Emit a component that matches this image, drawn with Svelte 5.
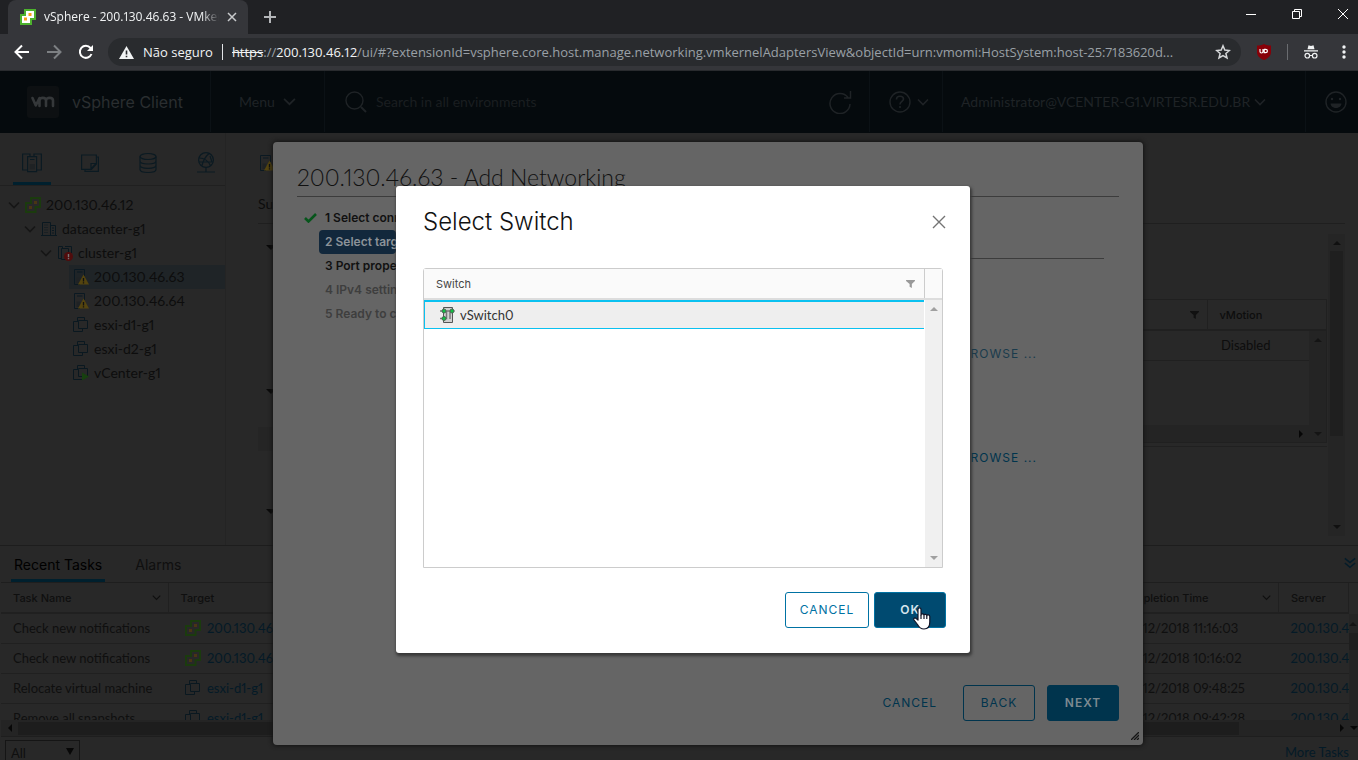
<script>
  const tree = [
    { label: '200.130.46.12', icon: 'vcenter', depth: 0, open: true },
    { label: 'datacenter-g1', icon: 'datacenter', depth: 1, open: true },
    { label: 'cluster-g1', icon: 'cluster', depth: 2, open: true },
    { label: '200.130.46.63', icon: 'host', depth: 3, selected: true },
    { label: '200.130.46.64', icon: 'host', depth: 3 },
    { label: 'esxi-d1-g1', icon: 'vm', depth: 3 },
    { label: 'esxi-d2-g1', icon: 'vm', depth: 3 },
    { label: 'vCenter-g1', icon: 'vmon', depth: 3 }
  ];
  const inventory = ['hosts', 'vms', 'storage', 'network'];
  const tasks = [
    { name: 'Check new notifications', icon: 'vcenter', target: '200.130.46.12', time: '12/2018 11:16:03' },
    { name: 'Check new notifications', icon: 'vcenter', target: '200.130.46.12', time: '12/2018 10:16:02' },
    { name: 'Relocate virtual machine', icon: 'vm', target: 'esxi-d1-g1', time: '12/2018 09:48:25' },
    { name: 'Remove all snapshots', icon: 'vm', target: 'esxi-d1-g1', time: '12/2018 09:42:28' }
  ];
  const steps = [
    { label: '1 Select connection type', state: 'done' },
    { label: '2 Select target device', state: 'current' },
    { label: '3 Port properties', state: 'open' },
    { label: '4 IPv4 settings', state: 'off' },
    { label: '5 Ready to complete', state: 'off' }
  ];
</script>

{#snippet chevron(w)}
  <svg width={w} height={w} viewBox="0 0 12 12" fill="none" stroke="currentColor" stroke-width="1.6" aria-hidden="true"><path d="M1 3.5l5 5 5-5" /></svg>
{/snippet}

{#snippet funnel()}
  <svg width="9" height="8" viewBox="0 0 10 9" fill="currentColor" aria-hidden="true"><path d="M0 0h10v1L6.500 4.500V9L4 7.500v-3L0 1z" /></svg>
{/snippet}

{#snippet arrow(dir)}
  <svg class="arrow" width="8" height="8" viewBox="0 0 8 8" fill="currentColor" aria-hidden="true">
    {#if dir === 'up'}<path d="M0 6l4-4 4 4z" />
    {:else if dir === 'down'}<path d="M0 2l4 4 4-4z" />
    {:else if dir === 'left'}<path d="M6 0L2 4l4 4z" />
    {:else}<path d="M2 0l4 4-4 4z" />{/if}
  </svg>
{/snippet}

{#snippet icon(name)}
  <svg class="ico" width="16" height="16" viewBox="0 0 16 16" fill="none" aria-hidden="true">
    {#if name === 'vcenter'}
      <path d="M6 1h9v9h-4.500v5H1V6h5z" stroke="#1b3b0e" stroke-width="2" />
      <path d="M9 4h3v3H9zM4 9h3v3H4z" fill="#4a3514" />
    {:else if name === 'datacenter'}
      <path d="M1.500 14.500v-13h8v13M9.500 4.500h5v10M0 14.500h16" stroke="#0a1820" />
      <path d="M3.500 4h4M3.500 6.500h4M3.500 9h4M3.500 11.500h4" stroke="#0a1820" stroke-dasharray="1 1" />
      <path d="M11 7h2M11 9.500h2M11 12h2" stroke="#0a1820" />
    {:else if name === 'cluster'}
      <path d="M4 13.500H1.500v-12h4v2M8 1.500h6.500V8M4.500 3.500h7v11h-7z" stroke="#0a1820" />
      <circle cx="11.500" cy="11.500" r="4.500" fill="#500c0c" />
      <path d="M11.500 9v3.200M11.500 13v1.300" stroke="#777" stroke-width="1.400" />
    {:else if name === 'host'}
      <path d="M7 15.500H1.500V.500h10V7M4 3h5.500" stroke="#0b1922" />
      <path d="M3.500 8.500h4V14h-4z" fill="#1f2224" />
      <path d="M10.500 5.500l5.500 10H5z" fill="#54440f" />
      <path d="M10.500 9v3.500M10.500 13.300v1.200" stroke="#111" stroke-width="1.300" />
    {:else}
      <path d="M4.500 5V.500h7V4M5.500 4.500H.500v10h9V12M5.500 4.500v7h9v-8h-9z" stroke="#0a1820" />
      {#if name === 'vmon'}<path d="M9 7.500l7 4-7 4z" fill="#17400f" />{/if}
    {/if}
  </svg>
{/snippet}

<div class="window">
  <header class="browser">
    <div class="strip">
      <div class="tab">
        <svg width="16" height="16" viewBox="0 0 16 16" aria-hidden="true">
          <path d="M5 1h10v9h-4v5H1V6h4z" fill="#fff" stroke="#4db22d" stroke-width="2" />
          <path d="M8.500 4h3v3h-3zM4 8.500h3v3H4z" fill="#f9a11b" />
        </svg>
        <span class="title">vSphere - 200.130.46.63 - VMkernel</span>
        <button class="bare" aria-label="Close tab">
          <svg width="10" height="10" viewBox="0 0 10 10" stroke="#c9cbcd" stroke-width="1.500"><path d="M1 1l8 8M9 1L1 9" /></svg>
        </button>
      </div>
      <button class="bare plus" aria-label="New tab">
        <svg width="12" height="12" viewBox="0 0 12 12" stroke="#b4b6b9" stroke-width="2"><path d="M6 0v12M0 6h12" /></svg>
      </button>
      <div class="sys">
        <button class="bare" aria-label="Minimize"><svg width="12" height="12" viewBox="0 0 12 12" stroke="#fff"><path d="M1 6.500h10" /></svg></button>
        <button class="bare" aria-label="Restore"><svg width="12" height="12" viewBox="0 0 12 12" stroke="#fff" fill="none"><path d="M1.500 3.500h7v7h-7zM3.500 3V1.500h7v7H9" /></svg></button>
        <button class="bare" aria-label="Close"><svg width="12" height="12" viewBox="0 0 12 12" stroke="#fff"><path d="M1 1l10 10M11 1L1 11" /></svg></button>
      </div>
    </div>
    <div class="toolbar">
      <button class="bare" aria-label="Back"><svg width="16" height="16" viewBox="0 0 16 16" fill="none" stroke="#fff" stroke-width="2"><path d="M15 8H2M8 1.500L1.500 8 8 14.500" /></svg></button>
      <button class="bare" aria-label="Forward"><svg width="16" height="16" viewBox="0 0 16 16" fill="none" stroke="#7d8083" stroke-width="2"><path d="M1 8h13M8 1.500L14.500 8 8 14.500" /></svg></button>
      <button class="bare" aria-label="Reload"><svg width="16" height="16" viewBox="0 0 16 16" fill="none" stroke="#fff" stroke-width="2"><path d="M13.500 10A6 6 0 1 1 12.500 4L14 5.500" /><path d="M15 1v6H9z" fill="#fff" stroke="none" /></svg></button>
      <div class="omni">
        <svg width="15" height="13" viewBox="0 0 15 13" aria-hidden="true"><path d="M7.500 0L15 13H0z" fill="#f1f3f4" /><path d="M7.500 4.500v4M7.500 9.800v1.500" stroke="#292b2e" stroke-width="1.600" /></svg>
        <span class="insecure">Não seguro</span>
        <span class="bar"></span>
        <span class="url"><s>https</s>://<b>200.130.46.12</b>/ui/#?extensionId=vsphere.core.host.manage.networking.vmkernelAdaptersView&amp;objectId=urn:vmomi:HostSystem:host-25:7183620d...</span>
        <button class="bare" aria-label="Bookmark"><svg width="16" height="16" viewBox="0 0 16 16" fill="none" stroke="#d5d7d9" stroke-width="1.500"><path d="M8 1.800l1.800 4.300 4.600.400-3.500 3 1.100 4.500L8 11.600 4 14l1.100-4.500-3.500-3 4.600-.400z" /></svg></button>
      </div>
      <svg width="14" height="16" viewBox="0 0 14 16" aria-hidden="true"><path d="M7 0c2 1 4.500 1.600 7 1.600V8c0 4-3 6.500-7 8-4-1.500-7-4-7-8V1.600C2.500 1.600 5 1 7 0z" fill="#870008" /><path d="M3 5v2.500a1.500 1.500 0 0 0 3 0V5M7.200 5.500v3.200h1.500a1.700 1.700 0 0 0 0-3.400H7" fill="none" stroke="#fff" stroke-width="1.200" /></svg>
      <span class="bar dim"></span>
      <svg width="14" height="14" viewBox="0 0 14 14" aria-hidden="true"><path d="M3.500 4.200L4.500.300l2.500.7 2.500-.7 1 3.900zM0 5.200h14v1.400H0z" fill="#f1f3f4" /><circle cx="3.300" cy="10.700" r="2.300" fill="none" stroke="#f1f3f4" stroke-width="1.200" /><circle cx="10.700" cy="10.700" r="2.300" fill="none" stroke="#f1f3f4" stroke-width="1.200" /><path d="M5.500 10.500h3" stroke="#f1f3f4" /></svg>
      <button class="bare more" aria-label="Browser menu"><svg width="4" height="14" viewBox="0 0 4 14" fill="#f1f3f4"><circle cx="2" cy="2" r="1.700" /><circle cx="2" cy="7" r="1.700" /><circle cx="2" cy="12" r="1.700" /></svg></button>
    </div>
  </header>

  <div class="top">
    <div class="brand">
      <span class="logo"><svg width="24" height="12" viewBox="0 0 24 12" fill="none" stroke="#35383a" stroke-width="2.600" stroke-linecap="round" stroke-linejoin="round" aria-hidden="true"><path d="M1.500 2l3.300 7.500L8.500 2v8M8.500 4.500C8.500 1 15 1 15 4.500V10M15 4.500c0-3.500 7-3.500 7 0V10" /></svg></span>
      <span class="product">vSphere Client</span>
    </div>
    <button class="bare menu">Menu {@render chevron(13)}</button>
    <label class="search">
      <svg width="22" height="22" viewBox="0 0 22 22" fill="none" stroke="currentColor" stroke-width="1.400" aria-hidden="true"><circle cx="9.500" cy="9.500" r="8.500" /><path d="M16 16l5 5" stroke-width="2" /></svg>
      <input type="text" placeholder="Search in all environments" aria-label="Search in all environments" />
    </label>
    <button class="bare refresh" aria-label="Refresh"><svg width="24" height="24" viewBox="0 0 24 24" fill="none" stroke="currentColor" stroke-width="1.500"><path d="M20 7.500A10 10 0 1 0 22 14M22.500 1v7H16" /></svg></button>
    <button class="bare help" aria-label="Help"><svg width="22" height="22" viewBox="0 0 22 22" fill="none" stroke="currentColor" stroke-width="1.400"><circle cx="11" cy="11" r="10" /><path d="M7.500 8.500c0-4.500 7-4 7-.500 0 2.500-3.500 2.500-3.500 5.500M11 15v2" stroke-width="1.600" /></svg>{@render chevron(12)}</button>
    <button class="bare user">Administrator@VCENTER-G1.VIRTESR.EDU.BR {@render chevron(12)}</button>
    <button class="bare smile" aria-label="Feedback"><svg width="22" height="22" viewBox="0 0 22 22" fill="none" stroke="currentColor" stroke-width="1.400"><circle cx="11" cy="11" r="10" /><path d="M5.500 12.500h11c-.500 6-10.500 6-11 0z" fill="currentColor" stroke="none" /><circle cx="7" cy="8" r="1.200" fill="currentColor" stroke="none" /><circle cx="15" cy="8" r="1.200" fill="currentColor" stroke="none" /></svg></button>
  </div>

  <main>
    <nav class="side">
      <div class="inv">
        {#each inventory as name, i}
          <button class="bare" class:active={i === 0} aria-label={name}>
            <svg width="20" height="22" viewBox="0 0 20 22" fill="none" stroke="#0b1a22" stroke-width="1.200">
              {#if name === 'hosts'}
                <path d="M5 18H.600V2H8v3M12 4V2h7.400v16H15M5.600 4.600h9v15h-9zM8 7.500h4.500" /><path d="M7.500 12h5.500v5.500H7.500z" fill="#1f2224" stroke="none" />
              {:else if name === 'vms'}
                <path d="M17 5h1.400v14.400H5V18M1.600 3h14.800v9l-5 5.400H1.600zM16 11.500h-5v5.500z" />
              {:else if name === 'storage'}
                <ellipse cx="10" cy="4.500" rx="8" ry="3" /><path d="M2 4.500v13c0 4 16 4 16 0v-13M2 9c0 4 16 4 16 0M2 13.300c0 4 16 4 16 0" />
              {:else}
                <circle cx="10" cy="8" r="7.400" /><path d="M3.500 6c5 0 8 2 11 7.500M6 13.500C7 9 9 5 13 1.500M3 10h13l-2-6M10 15.500v4M1 20h18" />
              {/if}
            </svg>
          </button>
        {/each}
      </div>
      <ul class="tree">
        {#each tree as node}
          <li class="d{node.depth}" class:selected={node.selected}>
            {#if node.open}<span class="twist">{@render chevron(12)}</span>{/if}
            {@render icon(node.icon)}
            <span>{node.label}</span>
          </li>
        {/each}
      </ul>
    </nav>

    <section class="content">
      <div class="object">
        <span class="objicon">{@render icon('host')}</span>
        <a href="#summary">Summary</a>
      </div>
      <div class="pane">
        <div class="marks" aria-hidden="true">
          <i class="caret"></i><i class="caret"></i><i class="block"></i><i class="caret"></i>
        </div>
        <div class="adapters">
          <div class="grid">
            <table>
              <thead><tr><th><span class="end">{@render funnel()}</span></th><th>vMotion</th></tr></thead>
              <tbody><tr><td></td><td>Disabled</td></tr></tbody>
            </table>
            <div class="gridv">{@render arrow('up')}{@render arrow('down')}</div>
            <div class="gridh">{@render arrow('right')}</div>
          </div>
        </div>
        <div class="bigscroll">{@render arrow('up')}<i></i>{@render arrow('down')}</div>
      </div>
    </section>
  </main>

  <section class="tasks">
    <div class="ttabs">
      <button class="bare on">Recent Tasks</button>
      <button class="bare">Alarms</button>
      <button class="bare collapse" aria-label="Collapse"><svg width="12" height="12" viewBox="0 0 14 13" fill="none" stroke="#041c2a" stroke-width="1.800"><path d="M1 1l6 5 6-5M1 6.500l6 5 6-5" /></svg></button>
    </div>
    <div class="list">
      <table>
        <colgroup><col class="c1" /><col /><col class="c3" /><col class="c4" /></colgroup>
        <thead>
          <tr>
            <th><span class="split">Task Name {@render chevron(9)}</span></th>
            <th>Target</th>
            <th><span class="split">Completion Time {@render chevron(9)}</span></th>
            <th>Server</th>
          </tr>
        </thead>
        <tbody>
          {#each tasks as t}
            <tr>
              <td>{t.name}</td>
              <td><span class="obj">{@render icon(t.icon)}<a href="#target">{t.target}</a></span></td>
              <td class="time">{t.time}</td>
              <td><a href="#server">200.130.46.12</a></td>
            </tr>
          {/each}
        </tbody>
      </table>
      <div class="listv">{@render arrow('up')}<i></i></div>
    </div>
    <div class="listh">{@render arrow('left')}<i></i><span>{@render arrow('right')}</span><span>{@render arrow('down')}</span></div>
    <div class="foot">
      <label class="filter">
        <select aria-label="Filter tasks"><option>All</option></select>
        <svg width="8" height="8" viewBox="0 0 8 8" fill="#070707" aria-hidden="true"><path d="M0 0h8L4 7z" /></svg>
      </label>
      <a href="#more">More Tasks</a>
    </div>
  </section>

  <section class="wizard" aria-label="Add Networking">
    <h2>200.130.46.63 - Add Networking</h2>
    <div class="wbody">
      <ol>
        {#each steps as s}
          <li class={s.state}>
            <span class="tick">{#if s.state === 'done'}<svg width="13" height="10" viewBox="0 0 13 10" fill="none" stroke="#06551b" stroke-width="2.600" aria-hidden="true"><path d="M1 5l3.500 3.500L12 1" /></svg>{/if}</span>
            <span class="step">{s.label}</span>
          </li>
        {/each}
      </ol>
      <div class="wpage">
        <button class="bare link faded">BROWSE ...</button>
        <button class="bare link">BROWSE ...</button>
      </div>
    </div>
    <div class="wfoot">
      <button class="bare link">CANCEL</button>
      <button class="btn back">BACK</button>
      <button class="btn primary">NEXT</button>
    </div>
    <svg class="grip" width="8" height="8" viewBox="0 0 8 8" stroke="#151515" stroke-width="1.300" aria-hidden="true"><path d="M0 8l8-8M3 8l5-5M6 8l2-2" /></svg>
  </section>

  <div class="dialog" role="dialog" aria-labelledby="dlg">
    <div class="dhead">
      <h2 id="dlg">Select Switch</h2>
      <button class="bare" aria-label="Close dialog"><svg width="14" height="14" viewBox="0 0 14 14" stroke="#747474" stroke-width="1.400"><path d="M1 1l12 12M13 1L1 13" /></svg></button>
    </div>
    <div class="switches">
      <table>
        <colgroup><col /><col class="sc" /></colgroup>
        <thead><tr><th><span class="split">Switch {@render funnel()}</span></th><th></th></tr></thead>
        <tbody>
          <tr><td><span class="sw">
            <svg width="16" height="16" viewBox="0 0 16 16" fill="none" aria-hidden="true"><path d="M3.500.500h9v15h-9z" fill="#d0d0d0" stroke="#555" /><path d="M0 4h14.500M0 11.500h4M6.500 4v7.500H4M10 4v8" stroke="#777" stroke-width="1.500" /><circle cx="4" cy="4" r="2" fill="#0fc142" stroke="#4b6653" /><circle cx="12" cy="4" r="2" fill="#0fc142" stroke="#4b6653" /><circle cx="4" cy="11.500" r="2" fill="#0fc142" stroke="#4b6653" /></svg>
            vSwitch0</span></td></tr>
        </tbody>
      </table>
      <div class="switchv">{@render arrow('up')}{@render arrow('down')}</div>
    </div>
    <div class="dfoot">
      <button class="btn cancel">CANCEL</button>
      <button class="btn ok">OK</button>
    </div>
    <svg class="hand" width="18" height="23" viewBox="0 0 18 23" fill="#fff" stroke="#111527" stroke-width="1.200" stroke-linejoin="round" aria-hidden="true"><path d="M5 13V2.500C5 .300 8 .300 8 2.500V8c0-1.500 3-1.500 3 .300 0-1.400 2.800-1.300 2.800.500 0-1.300 3-1.200 3 .700v5.500c0 4-2 7-5.800 7-3.500 0-5-1.500-6.500-4.500L1 13c-.900-1.800 1-2.700 2.200-1.500z" /><path d="M8 8v4M11 8.500V12M13.800 9v3" /></svg>
  </div>
</div>

<style>
  :global(body) { margin: 0; background: #282828; }
  * { box-sizing: border-box; }
  .window { position: relative; display: flex; flex-direction: column; height: 100vh; overflow: hidden; font-family: Lato, "Open Sans", sans-serif; font-variant-numeric: proportional-nums; font-size: 13px; line-height: 24px; color: #0d0d0d; background: #282828; }
  button, input, select { font: inherit; color: inherit; }
  .bare { border: 0; padding: 0; background: none; display: flex; align-items: center; }
  svg { display: block; flex: none; }
  h2, ul, ol { margin: 0; padding: 0; list-style: none; }
  a { text-decoration: none; }
  table { border-collapse: collapse; border-spacing: 0; table-layout: fixed; width: 100%; }
  th, td { padding: 0 12px; text-align: left; white-space: nowrap; overflow: hidden; }
  th, .btn, .link, .product, .step, .ttabs button, .dialog h2 { font-family: Inter, "Open Sans", sans-serif; }
  th { font-size: 11px; font-weight: 500; }

  .browser { flex: none; background: #35363a; border-bottom: 1px solid #292b2e; font-family: "Open Sans", "Noto Sans", sans-serif; color: #f1f3f4; }
  .strip { display: flex; align-items: center; height: 34px; padding-left: 8px; background: #202124; }
  .tab { display: flex; align-items: center; gap: 8px; width: 240px; height: 34px; padding: 0 11px 0 12px; border-radius: 8px 8px 0 0; background: #35363a; }
  .title { flex: 1; font-size: 12px; white-space: nowrap; overflow: hidden; mask-image: linear-gradient(to right, #000 90%, transparent); }
  .plus { margin-left: 16px; }
  .sys { display: flex; gap: 34px; margin-left: auto; padding: 0 9px 6px 0; }
  .toolbar { display: flex; align-items: center; height: 36px; padding: 0 12px 0 14px; gap: 16px; }
  .omni { display: flex; align-items: center; flex: 1; min-width: 0; height: 28px; margin-left: -2px; padding: 0 10px 0 11px; gap: 9px; border-radius: 14px; background: #292b2e; font-size: 13px; }
  .insecure { white-space: nowrap; }
  .url { flex: 1; min-width: 0; overflow: hidden; white-space: nowrap; color: #9aa0a6; }
  .url b, .url s { font-weight: 400; color: #f1f3f4; }
  .bar { width: 1px; height: 16px; background: #e3e5e7; }
  .bar.dim { background: #6a6c70; }
  .more { margin-left: 8px; }

  .top { display: flex; align-items: stretch; flex: none; height: 62px; padding-bottom: 1px; background: #050a0d; color: #1f2326; }
  .top > * + * { border-left: 1px solid #0b1115; }
  .brand { display: flex; align-items: center; gap: 13px; width: 210px; padding-left: 27px; color: #2a2e30; }
  .logo { display: grid; place-items: center; width: 32px; height: 32px; border-radius: 3px; background: #0d1012; }
  .product { font-size: 16px; }
  .menu { gap: 8px; width: 114px; padding-left: 28px; font-size: 14px; }
  .search { display: flex; align-items: center; gap: 9px; flex: 1; padding-left: 20px; }
  .search input { width: 240px; border: 0; padding: 0; background: none; font-size: 14px; }
  .search input::placeholder { color: #1a1e20; opacity: 1; }
  .top > .refresh { padding-right: 17px; border-left: 0; }
  .help { gap: 6px; width: 73px; padding-left: 19px; }
  .user { gap: 4px; width: 363px; padding-left: 18px; font-size: 14px; }
  .smile { width: 53px; padding-left: 19px; }

  main { display: flex; flex: 1; min-height: 0; }
  .side { width: 226px; border-right: 1px solid #242424; }
  .inv { display: flex; height: 53px; padding-left: 13px; gap: 20px; border-bottom: 1px solid #202020; }
  .inv button { width: 38px; padding-top: 11px; justify-content: center; border-bottom: 3px solid transparent; }
  .inv .active { border-bottom-color: #00202e; }
  .tree { padding-top: 7px; }
  .tree li { display: flex; align-items: center; gap: 5px; height: 24px; padding-left: 8px; white-space: nowrap; font-size: 14px; }
  .tree .d1 { padding-left: 24px; }
  .tree .d2 { padding-left: 40px; }
  .tree .d3 { margin-left: 69px; padding-left: 4px; }
  .tree .selected { background: #1f2427; }
  .twist { color: #161616; }

  .content { flex: 1; min-width: 0; margin-left: 2px; display: flex; flex-direction: column; padding: 22px 13px 0 30px; }
  .object { display: flex; flex-direction: column; gap: 21px; padding: 0 0 7px; border-bottom: 1px solid #1f1f1f; }
  .objicon { padding-left: 1px; }
  .object a { font-size: 14px; color: #0c0c0c; }
  .pane { display: flex; height: 302px; margin-top: 10px; }
  .marks { width: 30px; flex: none; }
  .marks i { display: block; }
  .caret { width: 0; margin: 11px 0 0 8px; border: 5px solid transparent; border-top-color: #090909; border-bottom: 0; }
  .caret + .caret { margin-top: 139px; }
  .block { height: 24px; margin-top: 33px; background: #252525; }
  .block + .caret { margin-top: 58px; }
  .adapters { flex: 1; height: 213px; margin-right: 1px; padding-top: 65px; border-bottom: 1px solid #202020; }
  .grid { position: relative; height: 144px; border: 1px solid #202020; }
  .grid th { height: 30px; border-bottom: 2px solid #202020; }
  .grid th:last-child { width: 119px; border-left: 1px solid #202020; }
  .grid td { height: 30px; padding-left: 14px; border-bottom: 1px solid #202020; }
  .end { display: flex; justify-content: flex-end; margin-right: -4px; color: #111; }
  .gridv, .gridh { position: absolute; right: 0; bottom: 0; display: flex; background: #242424; color: #141414; }
  .gridv { top: 31px; width: 17px; flex-direction: column; justify-content: space-between; align-items: center; padding: 5px 0 4px; }
  .gridh { left: 0; right: 17px; height: 17px; justify-content: flex-end; align-items: center; padding-right: 4px; color: #060606; }
  .bigscroll { display: flex; flex-direction: column; align-items: center; width: 17px; padding: 5px 0; background: #252525; color: #101010; }
  .bigscroll i { width: 13px; height: 185px; margin: 4px 0 auto; background: #1f1f1f; }

  .tasks { position: relative; flex: none; height: 215px; padding-left: 1px; border-top: 1px solid #1d1d1d; color: #0f0f0f; }
  .ttabs { display: flex; height: 37px; padding: 0 2px 0 10px; gap: 26px; border-bottom: 1px solid #1e1e1e; }
  .ttabs button { padding: 4px 4px 0; font-size: 14px; border-bottom: 3px solid transparent; }
  .ttabs button.on { border-bottom-color: #00202e; color: #000; padding: 4px 3px 0; }
  .ttabs .collapse { margin-left: auto; padding: 0; }
  .list { display: flex; height: 137px; overflow: hidden; }
  .list th { height: 30px; border-bottom: 2px solid #202020; border-right: 1px solid #202020; }
  .list td { height: 30px; border-bottom: 1px solid #202020; }
  .list td:last-child { padding-right: 0; }
  .list a, .foot a { color: #041a27; }
  .c1 { width: 167px; }
  .c3 { width: 172px; }
  .c4 { width: 70px; }
  .list td.time { padding-left: 36px; }
  .split { display: flex; align-items: center; justify-content: space-between; }
  .list .split { margin-right: -5px; }
  .obj { display: flex; align-items: center; gap: 6px; padding-left: 5px; }
  .listv { flex: none; width: 9px; margin-top: 31px; padding-top: 6px; background: #242424; color: #141414; }
  .listv i { display: block; width: 9px; height: 17px; margin-top: 5px; background: #1e1e1e; }
  .listh { display: flex; align-items: center; height: 17px; padding-left: 5px; gap: 4px; background: #242424; border-bottom: 1px solid #1e1e1e; color: #070707; }
  .listh i { flex: 1; height: 13px; margin-right: 95px; background: #1d1d1d; }
  .foot { display: flex; justify-content: space-between; padding: 3px 9px 0 4px; }
  .filter { display: grid; align-items: center; width: 75px; }
  .filter > * { grid-area: 1 / 1; }
  .filter select { appearance: none; width: 100%; height: 24px; padding: 0 5px; border: 1px solid #151515; border-radius: 0; background: #282828; }
  .filter svg { justify-self: end; margin-right: 6px; }

  .wizard { position: absolute; left: 273px; right: 215px; top: 142px; bottom: 15px; display: flex; flex-direction: column; padding: 20px 24px 24px; border-radius: 4px; background: #656565; box-shadow: 0 0 4px 1px #141414; color: #111; }
  .wizard h2 { height: 35px; border-bottom: 1px solid #3c3c3c; font-size: 23px; font-weight: 300; line-height: 30px; }
  .wbody { display: flex; flex: 1; padding: 9px 15px 0 7px; }
  .wbody ol { width: 92px; font-size: 12px; font-weight: 600; }
  .wbody li { display: flex; height: 24px; }
  .tick { display: flex; flex: none; align-items: center; width: 15px; }
  .step { flex: 1; min-width: 0; padding-left: 6px; border-radius: 4px; overflow: hidden; white-space: nowrap; }
  .current .step { background: #12283c; color: #8c9399; }
  .off { color: #3e3e3e; }
  .wpage { flex: 1; display: flex; flex-direction: column; align-items: flex-end; gap: 80px; margin: 52px 0 0 108px; padding: 83px 67px 0 0; border-top: 1px solid #3c3c3c; }
  .link { color: #00344d; letter-spacing: 1px; font-size: 12px; }
  .faded { color: #1a3b4c; }
  .wfoot { display: flex; align-items: center; justify-content: flex-end; gap: 12px; }
  .wfoot .link { margin-right: 14px; }
  .btn { height: 36px; min-width: 72px; padding: 0 12px; border: 1px solid #0072a3; border-radius: 3px; background: none; font-size: 12px; letter-spacing: 1px; }
  .back { border-color: #00344d; color: #00344d; }
  .primary { border-color: #00344d; background: #00344d; color: #7d8a91; font-weight: 600; }
  .grip { position: absolute; right: 4px; bottom: 5px; }

  .dialog { position: absolute; left: 396px; right: 388px; top: 186px; bottom: 107px; display: flex; flex-direction: column; padding: 21px 24px 25px 27px; border-radius: 3px; background: #fff; box-shadow: 1px 2px 3px 1px #383838; color: #454545; }
  .dhead { display: flex; align-items: center; justify-content: space-between; height: 30px; }
  .dhead h2 { font-size: 24px; font-weight: 300; line-height: 30px; color: #111; }
  .switches { position: relative; flex: 1; margin: 31px 3px 24px 0; border: 1px solid #ccc; border-radius: 3px 3px 0 0; }
  .sc { width: 18px; }
  .switches th { height: 30px; background: #fafafa; border-bottom: 2px solid #ddd; border-right: 1px solid #ccc; font-weight: 400; }
  .switches th:last-child { border-right: 0; }
  .switches th .split { color: #454545; margin-right: -3px; }
  .switches th :global(svg) { color: #999; }
  .switches td { height: 30px; background: #eee; box-shadow: inset 0 -1px #0ac1f0, inset 1px 2px #0ac1f0; padding-left: 16px; }
  .sw { display: flex; align-items: center; gap: 4px; color: #333; }
  .switchv { position: absolute; top: 31px; bottom: 0; right: 0; width: 17px; display: flex; flex-direction: column; align-items: center; justify-content: space-between; padding: 5px 0; background: #f0f0f0; color: #a0a0a0; }
  .dfoot { display: flex; justify-content: flex-end; gap: 5px; }
  .cancel { min-width: 84px; color: #0072a3; }
  .ok { background: #004a70; color: #d5e4ec; font-weight: 600; }
  .hand { position: absolute; right: 39px; bottom: 23px; }
</style>
